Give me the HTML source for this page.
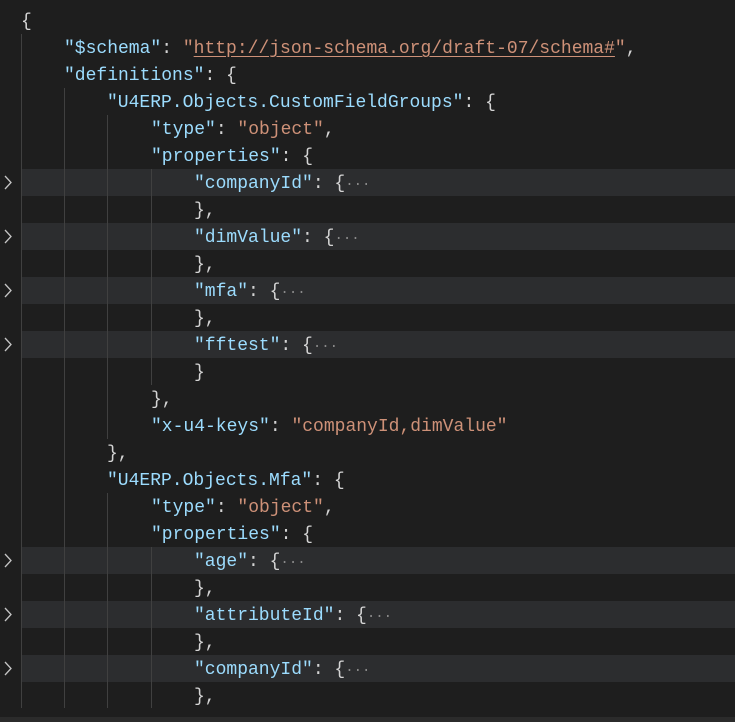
<!DOCTYPE html>
<html><head><meta charset="utf-8"><style>
body{margin:0;width:735px;height:722px;background:#1e1e1e;overflow:hidden;position:relative;font-family:"Liberation Mono",monospace;font-size:18px}
.l{position:absolute;left:0;width:735px;height:27px;line-height:27px;white-space:pre;color:#d4d4d4}
.hl{background:#2c2d2f;left:21px;width:714px}
.t{position:absolute;top:2px}
.k{color:#9cdcfe}.s{color:#ce9178}.u{color:#ce9178;text-decoration:underline;text-underline-offset:3px}
.e{color:#8a8a8a;font-size:14px}
.g{position:absolute;width:1px;background:#404040}
.ch{position:absolute;left:3px;width:10px;height:27px}
</style></head><body>
<div class="l hl" style="top:169px"></div>
<div class="l hl" style="top:223px"></div>
<div class="l hl" style="top:277px"></div>
<div class="l hl" style="top:331px"></div>
<div class="l hl" style="top:547px"></div>
<div class="l hl" style="top:601px"></div>
<div class="l hl" style="top:655px"></div>

<div class="g" style="left:21px;top:34px;height:674px"></div>
<div class="g" style="left:64px;top:88px;height:620px"></div>
<div class="g" style="left:107px;top:115px;height:324px"></div>
<div class="g" style="left:107px;top:493px;height:215px"></div>
<div class="g" style="left:151px;top:169px;height:216px"></div>
<div class="g" style="left:151px;top:547px;height:161px"></div>

<svg class="ch" style="top:169px" viewBox="0 0 10 27"><path d="M2 7l6 6.5-6 6.5" fill="none" stroke="#c5c5c5" stroke-width="1.3"/></svg>
<svg class="ch" style="top:223px" viewBox="0 0 10 27"><path d="M2 7l6 6.5-6 6.5" fill="none" stroke="#c5c5c5" stroke-width="1.3"/></svg>
<svg class="ch" style="top:277px" viewBox="0 0 10 27"><path d="M2 7l6 6.5-6 6.5" fill="none" stroke="#c5c5c5" stroke-width="1.3"/></svg>
<svg class="ch" style="top:331px" viewBox="0 0 10 27"><path d="M2 7l6 6.5-6 6.5" fill="none" stroke="#c5c5c5" stroke-width="1.3"/></svg>
<svg class="ch" style="top:547px" viewBox="0 0 10 27"><path d="M2 7l6 6.5-6 6.5" fill="none" stroke="#c5c5c5" stroke-width="1.3"/></svg>
<svg class="ch" style="top:601px" viewBox="0 0 10 27"><path d="M2 7l6 6.5-6 6.5" fill="none" stroke="#c5c5c5" stroke-width="1.3"/></svg>
<svg class="ch" style="top:655px" viewBox="0 0 10 27"><path d="M2 7l6 6.5-6 6.5" fill="none" stroke="#c5c5c5" stroke-width="1.3"/></svg>

<div class="l" style="top:7px"><span class="t" style="left:21px">{</span></div>
<div class="l" style="top:34px"><span class="t" style="left:64px"><span class="k">"$schema"</span>: <span class="s">"</span><span class="u">http://json-schema.org/draft-07/schema#</span><span class="s">"</span>,</span></div>
<div class="l" style="top:61px"><span class="t" style="left:64px"><span class="k">"definitions"</span>: {</span></div>
<div class="l" style="top:88px"><span class="t" style="left:107px"><span class="k">"U4ERP.Objects.CustomFieldGroups"</span>: {</span></div>
<div class="l" style="top:115px"><span class="t" style="left:151px"><span class="k">"type"</span>: <span class="s">"object"</span>,</span></div>
<div class="l" style="top:142px"><span class="t" style="left:151px"><span class="k">"properties"</span>: {</span></div>
<div class="l" style="top:169px"><span class="t" style="left:194px"><span class="k">"companyId"</span>: {<span class="e">···</span></span></div>
<div class="l" style="top:196px"><span class="t" style="left:194px">},</span></div>
<div class="l" style="top:223px"><span class="t" style="left:194px"><span class="k">"dimValue"</span>: {<span class="e">···</span></span></div>
<div class="l" style="top:250px"><span class="t" style="left:194px">},</span></div>
<div class="l" style="top:277px"><span class="t" style="left:194px"><span class="k">"mfa"</span>: {<span class="e">···</span></span></div>
<div class="l" style="top:304px"><span class="t" style="left:194px">},</span></div>
<div class="l" style="top:331px"><span class="t" style="left:194px"><span class="k">"fftest"</span>: {<span class="e">···</span></span></div>
<div class="l" style="top:358px"><span class="t" style="left:194px">}</span></div>
<div class="l" style="top:385px"><span class="t" style="left:151px">},</span></div>
<div class="l" style="top:412px"><span class="t" style="left:151px"><span class="k">"x-u4-keys"</span>: <span class="s">"companyId,dimValue"</span></span></div>
<div class="l" style="top:439px"><span class="t" style="left:107px">},</span></div>
<div class="l" style="top:466px"><span class="t" style="left:107px"><span class="k">"U4ERP.Objects.Mfa"</span>: {</span></div>
<div class="l" style="top:493px"><span class="t" style="left:151px"><span class="k">"type"</span>: <span class="s">"object"</span>,</span></div>
<div class="l" style="top:520px"><span class="t" style="left:151px"><span class="k">"properties"</span>: {</span></div>
<div class="l" style="top:547px"><span class="t" style="left:194px"><span class="k">"age"</span>: {<span class="e">···</span></span></div>
<div class="l" style="top:574px"><span class="t" style="left:194px">},</span></div>
<div class="l" style="top:601px"><span class="t" style="left:194px"><span class="k">"attributeId"</span>: {<span class="e">···</span></span></div>
<div class="l" style="top:628px"><span class="t" style="left:194px">},</span></div>
<div class="l" style="top:655px"><span class="t" style="left:194px"><span class="k">"companyId"</span>: {<span class="e">···</span></span></div>
<div class="l" style="top:682px"><span class="t" style="left:194px">},</span></div>
<div style="position:absolute;left:0;top:717px;width:735px;height:5px;background:#2b2b2b"></div>
</body></html>
